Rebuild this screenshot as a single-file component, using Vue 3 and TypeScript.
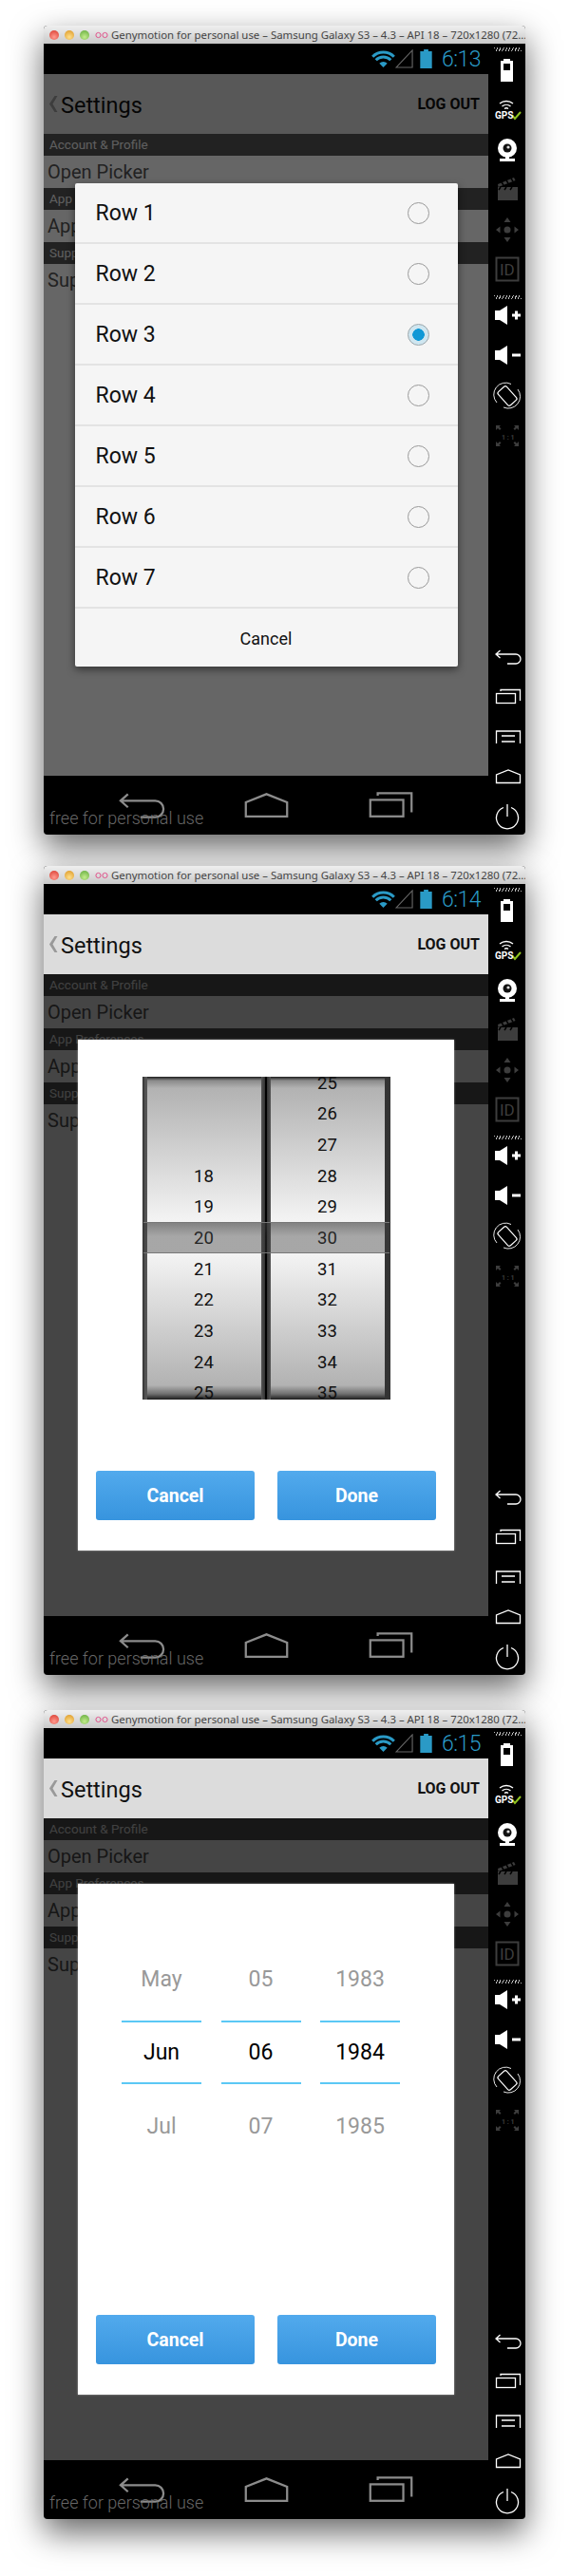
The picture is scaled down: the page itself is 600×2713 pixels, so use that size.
<script setup lang="ts">
type DialogKind = 'list' | 'wheel' | 'date';

interface Frame {
  time: string;
  dialog: DialogKind;
}

interface Tool {
  icon: string;
  label?: string;
  labelClass?: string;
  x?: number;
  y?: number;
}

const frames: Frame[] = [
  { time: '6:13', dialog: 'list' },
  { time: '6:14', dialog: 'wheel' },
  { time: '6:15', dialog: 'date' },
];

const sections = [
  { title: 'Account & Profile', row: 'Open Picker' },
  { title: 'App Preferences', row: 'App Settings' },
  { title: 'Support', row: 'Support Center' },
];

const listRows = ['Row 1', 'Row 2', 'Row 3', 'Row 4', 'Row 5', 'Row 6', 'Row 7'];

const leftWheel = ['', '', '', '18', '19', '20', '21', '22', '23', '24', '25'];
const rightWheel = ['25', '26', '27', '28', '29', '30', '31', '32', '33', '34', '35'];

const dateColumns = [
  ['May', 'Jun', 'Jul'],
  ['05', '06', '07'],
  ['1983', '1984', '1985'],
];

const topTools: Tool[] = [
  { icon: 'i-battery' },
  { icon: 'i-gps', label: 'GPS', labelClass: 'gps-text', x: 7, y: 31 },
  { icon: 'i-cam' },
  { icon: 'i-clapper' },
  { icon: 'i-dpad' },
  { icon: 'i-id', label: 'ID', labelClass: 'id-text', x: 12, y: 28 },
];
const midTools: Tool[] = [
  { icon: 'i-volup' },
  { icon: 'i-voldown' },
  { icon: 'i-rotate' },
  { icon: 'i-scale', label: '1 : 1', labelClass: 'scale-text', x: 14, y: 23 },
];
const bottomTools: Tool[] = [
  { icon: 'i-back' },
  { icon: 'i-recents' },
  { icon: 'i-menu' },
  { icon: 'i-home' },
  { icon: 'i-power' },
];
const navIcons = ['i-back', 'i-home', 'i-recents'];
</script>

<template>
  <svg class="sprites" aria-hidden="true">
    <symbol id="i-battery" viewBox="0 0 42 42">
      <path d="M16 10h7v2h3v22H13V12h3z" fill="#fff" />
      <rect x="16" y="15" width="7" height="7" fill="#000" />
    </symbol>
    <symbol id="i-gps" viewBox="0 0 42 42">
      <path d="M12 15a11 11 0 0 1 14 0M14.5 18a7 7 0 0 1 9 0M17 20.5a3.4 3.4 0 0 1 4 0" fill="none" stroke="#fff" stroke-width="1.4" />
      <path d="M25 27l3 4 6-7" fill="none" stroke="#8fc31f" stroke-width="2" />
    </symbol>
    <symbol id="i-cam" viewBox="0 0 42 42">
      <circle cx="20" cy="20" r="10" fill="#fff" />
      <circle cx="20" cy="20" r="4.5" fill="#111" />
      <circle cx="21" cy="19" r="1.6" fill="#ddd" />
      <rect x="18" y="29" width="4" height="3" fill="#fff" />
      <rect x="12" y="31" width="16" height="3" fill="#fff" />
    </symbol>
    <symbol id="i-clapper" viewBox="0 0 42 42">
      <rect x="10" y="19" width="21" height="14" fill="#3d3d3d" />
      <path d="M10 16l17-7 1.5 3-18 7z" fill="#3d3d3d" />
      <path d="M14 14l2 3M19 12l2 3M24 10l2 3M13 19l-2 3M19 19l-2 3M25 19l-2 3" stroke="#000" stroke-width="1.5" />
    </symbol>
    <symbol id="i-dpad" viewBox="0 0 42 42">
      <circle cx="20" cy="22" r="3.5" fill="#3d3d3d" />
      <path d="M20 9l3.5 5h-7zM20 35l3.5-5h-7zM8 22l4.5-3.5v7zM32 22l-4.5-3.5v7z" fill="#3d3d3d" />
    </symbol>
    <symbol id="i-id" viewBox="0 0 42 42">
      <rect x="8.5" y="9.5" width="23" height="24" fill="none" stroke="#3d3d3d" stroke-width="2" />
    </symbol>
    <symbol id="i-volup" viewBox="0 0 42 42">
      <path d="M7 13h5l8-5v20l-8-5H7z" fill="#fff" />
      <path d="M25 18h9M29.5 13.5v9" stroke="#fff" stroke-width="3" fill="none" />
    </symbol>
    <symbol id="i-voldown" viewBox="0 0 42 42">
      <path d="M7 13h5l8-5v20l-8-5H7z" fill="#fff" />
      <path d="M25 18h9" stroke="#fff" stroke-width="3" fill="none" />
    </symbol>
    <symbol id="i-rotate" viewBox="0 0 42 42">
      <path d="M9 26A12.5 12.5 0 0 1 24 6.5M31 12A12.5 12.5 0 0 1 16 31" fill="none" stroke="#fff" stroke-width="0.9" />
      <rect x="14" y="9.5" width="12" height="19" rx="2" transform="rotate(-42 20 19)" fill="none" stroke="#fff" stroke-width="1.2" />
    </symbol>
    <symbol id="i-scale" viewBox="0 0 42 42">
      <path d="M8 8h5l-1.500 1.500 2 2-1.500 1.500-2-2L8 13zM32 8h-5l1.500 1.500-2 2 1.500 1.500 2-2L32 13zM8 30h5l-1.500-1.500 2-2-1.500-1.500-2 2L8 25zM32 30h-5l1.500-1.500-2-2 1.500-1.500 2 2L32 25z" fill="#3d3d3d" />
    </symbol>
    <symbol id="i-back" viewBox="0 0 42 42">
      <path d="M12.500 14L8 18l4.500 4M8 18h21a5 5 0 0 1 0 10H20" fill="none" stroke="currentColor" stroke-width="1.300" />
    </symbol>
    <symbol id="i-recents" viewBox="0 0 42 42">
      <rect x="8.500" y="17.500" width="20" height="10" fill="none" stroke="currentColor" stroke-width="1.300" />
      <path d="M13 15v-1.500h20.500V25" fill="none" stroke="currentColor" stroke-width="1.300" />
    </symbol>
    <symbol id="i-menu" viewBox="0 0 42 42">
      <path d="M8.500 28V15h25v13M14 20h14M14 26h14" fill="none" stroke="currentColor" stroke-width="1.300" />
    </symbol>
    <symbol id="i-home" viewBox="0 0 42 42">
      <path d="M8.500 27.500V19L21 14l12.500 5v8.500z" fill="none" stroke="currentColor" stroke-width="1.300" />
    </symbol>
    <symbol id="i-power" viewBox="0 0 42 42">
      <path d="M16 11.500a11.500 11.500 0 1 0 8 0M20 8v13" fill="none" stroke="currentColor" stroke-width="1.300" />
    </symbol>
  </svg>

  <div class="page">
    <div v-for="frame in frames" :key="frame.time" class="window" :class="`window--${frame.dialog}`">
      <div class="titlebar">
        <span class="light light--red"></span>
        <span class="light light--yellow"></span>
        <span class="light light--green"></span>
        <svg class="geny" viewBox="0 0 14 8">
          <circle cx="3.5" cy="4" r="2.6" />
          <circle cx="10.5" cy="4" r="2.6" />
        </svg>
        <span class="title">Genymotion for personal use – Samsung Galaxy S3 – 4.3 – API 18 – 720x1280 (72...</span>
      </div>

      <div class="device">
        <div class="phone">
          <div class="statusbar">
            <svg class="status-wifi" viewBox="0 0 25 19">
              <path d="M1.2 6.700a16 16 0 0 1 22.600 0M4.700 10.200a11 11 0 0 1 15.600 0" fill="none" stroke="#2a9ac6" stroke-width="3" />
              <path d="M12.500 18l-4.200-4.200a6 6 0 0 1 8.400 0z" fill="#2a9ac6" />
            </svg>
            <svg class="status-signal" viewBox="0 0 20 21">
              <path d="M1 20L19 1v19z" fill="none" stroke="#666" stroke-width="1.2" />
            </svg>
            <svg class="status-battery" viewBox="0 0 13 21">
              <path d="M4 0h5v2h4v19H0V2h4z" fill="#2a9ac6" />
            </svg>
            <span class="clock">{{ frame.time }}</span>
          </div>

          <div class="screen">
            <div class="actionbar">
              <svg class="chevron" viewBox="0 0 9 17">
                <path d="M8.500 0L3.500 8.500l5 8.500H5.500L0 8.500 5.500 0z" fill="#999" />
              </svg>
              <span class="actionbar__title">Settings</span>
              <span class="actionbar__action">LOG OUT</span>
            </div>

            <div class="list">
              <template v-for="section in sections" :key="section.title">
                <div class="section">{{ section.title }}</div>
                <div class="row">{{ section.row }}</div>
              </template>

              <div class="overlay">
                <div v-if="frame.dialog === 'list'" class="sheet">
                  <div v-for="(row, i) in listRows" :key="row" class="sheet__row">
                    <span>{{ row }}</span>
                    <span class="radio" :class="{ 'radio--on': i === 2 }"></span>
                  </div>
                  <div class="sheet__cancel">Cancel</div>
                </div>

                <div v-else class="dialog">
                  <div v-if="frame.dialog === 'wheel'" class="wheel">
                    <div class="wheel__col">
                      <div class="wheel__list">
                        <span v-for="(n, i) in leftWheel" :key="i" class="wheel__item">{{ n }}</span>
                      </div>
                    </div>
                    <div class="wheel__divider"></div>
                    <div class="wheel__col">
                      <div class="wheel__list">
                        <span v-for="n in rightWheel" :key="n" class="wheel__item">{{ n }}</span>
                      </div>
                    </div>
                    <div class="wheel__band"></div>
                  </div>

                  <div v-else class="date">
                    <div v-for="col in dateColumns" :key="col[0]" class="date__col">
                      <span class="date__item">{{ col[0] }}</span>
                      <span class="date__item date__item--on">{{ col[1] }}</span>
                      <span class="date__item">{{ col[2] }}</span>
                    </div>
                  </div>

                  <div class="dialog__buttons">
                    <button class="btn">Cancel</button>
                    <button class="btn">Done</button>
                  </div>
                </div>
              </div>
            </div>
          </div>

          <div class="navbar">
            <svg v-for="icon in navIcons" :key="icon" class="navbar__icon">
              <use :href="`#${icon}`" />
            </svg>
            <span class="watermark">free for personal use</span>
          </div>
        </div>

        <div class="tools">
          <div class="tools__dots"></div>
          <svg v-for="tool in topTools" :key="tool.icon" class="tool" viewBox="0 0 42 42">
            <use :href="`#${tool.icon}`" />
            <text v-if="tool.label" :x="tool.x" :y="tool.y" :class="tool.labelClass">{{ tool.label }}</text>
          </svg>
          <div class="tools__dots tools__dots--mid"></div>
          <svg v-for="tool in midTools" :key="tool.icon" class="tool" viewBox="0 0 42 42">
            <use :href="`#${tool.icon}`" />
            <text v-if="tool.label" :x="tool.x" :y="tool.y" :class="tool.labelClass">{{ tool.label }}</text>
          </svg>
          <div class="tools__bottom">
            <svg v-for="tool in bottomTools" :key="tool.icon" class="tool" viewBox="0 0 42 42">
              <use :href="`#${tool.icon}`" />
            </svg>
          </div>
        </div>
      </div>
    </div>
  </div>
</template>

<style>
html,
body {
  margin: 0;
  background: #fff;
}
</style>

<style scoped>
.sprites {
  position: absolute;
  width: 0;
  height: 0;
}

.gps-text {
  font: 700 10px Roboto, sans-serif;
  fill: #fff;
}

.id-text {
  font: 400 17px Roboto, sans-serif;
  fill: #3d3d3d;
}

.scale-text {
  font: 700 7px Roboto, sans-serif;
  fill: #3d3d3d;
}

.page {
  box-sizing: border-box;
  width: 600px;
  height: 2713px;
  padding-top: 27px;
  overflow: hidden;
  font-family: Roboto, sans-serif;
}

.window {
  display: flex;
  flex-direction: column;
  width: 507px;
  height: 852px;
  margin-left: 46px;
  border-radius: 4px;
  background: #000;
  box-shadow: 0 14px 34px rgba(0, 0, 0, 0.6);
}

.window + .window {
  margin-top: 33px;
}

.window:last-child {
  margin-top: 37px;
}

/* mac title bar */
.titlebar {
  display: flex;
  align-items: center;
  flex: none;
  height: 19px;
  padding-left: 6px;
  border-radius: 4px 4px 0 0;
  background: linear-gradient(#efefef, #c9c9c9);
  overflow: hidden;
}

.light {
  flex: none;
  width: 10px;
  height: 10px;
  margin-right: 6px;
  border-radius: 50%;
}

.light--red {
  background: radial-gradient(circle at 50% 70%, #ff9a8f, #d8382c);
}

.light--yellow {
  background: radial-gradient(circle at 50% 70%, #ffdf8a, #da9420);
}

.light--green {
  background: radial-gradient(circle at 50% 70%, #c3ec8c, #5fa83a);
}

.geny {
  flex: none;
  width: 14px;
  height: 8px;
  margin-right: 3px;
  fill: none;
  stroke: #e0548c;
  stroke-width: 1;
}

.title {
  color: #444;
  font: 11.4px "Noto Sans", sans-serif;
  white-space: nowrap;
}

.device {
  display: grid;
  flex: 1;
  grid-template-columns: 468px 39px;
  min-height: 0;
}

.phone {
  display: flex;
  flex-direction: column;
  min-height: 0;
}

.statusbar {
  display: flex;
  align-items: center;
  justify-content: flex-end;
  flex: none;
  height: 32px;
  padding-right: 8px;
}

.status-wifi {
  width: 25px;
  height: 19px;
}

.status-signal {
  width: 19px;
  height: 20px;
}

.status-battery {
  width: 13px;
  height: 20px;
  margin-left: 7px;
}

.clock {
  margin-left: 10px;
  color: #2a9ac6;
  font-size: 23px;
  font-weight: 300;
  letter-spacing: -0.5px;
}

.screen {
  position: relative;
  display: flex;
  flex: 1;
  flex-direction: column;
  min-height: 0;
}

.actionbar {
  position: relative;
  display: flex;
  align-items: center;
  flex: none;
  height: 63px;
  padding: 0 9px 0 6px;
  background: #dcdcdc;
}

.chevron {
  width: 9px;
  height: 17px;
}

.actionbar__title {
  margin-left: 3px;
  padding-top: 2px;
  color: #111;
  font-size: 23.5px;
}

.actionbar__action {
  margin-left: auto;
  color: #111;
  font-size: 16px;
  font-weight: 700;
}

.list {
  flex: 1;
  background: #fff;
  min-height: 0;
}

.window--wheel .list,
.window--date .list {
  position: relative;
}

.section {
  height: 22.5px;
  padding-left: 6px;
  background: #555;
  color: #eee;
  font-size: 13.5px;
  line-height: 23px;
}

.row {
  height: 34.5px;
  padding-left: 4px;
  color: #555;
  font-size: 20px;
  line-height: 34px;
}

/* scrim */
.overlay {
  position: absolute;
  inset: 0;
  display: flex;
  align-items: center;
  justify-content: center;
  background: rgba(0, 0, 0, 0.73);
}

.window--list .overlay {
  background: rgba(0, 0, 0, 0.6);
}

.sheet {
  width: 403px;
  border-radius: 2px;
  background: #f5f5f5;
  box-shadow: 0 3px 8px rgba(0, 0, 0, 0.5);
}

.sheet__row {
  display: flex;
  align-items: center;
  justify-content: space-between;
  box-sizing: border-box;
  height: 64px;
  padding: 0 30px 0 22px;
  border-bottom: 2px solid #e3e3e3;
  color: #111;
  font-size: 23px;
}

.sheet__cancel {
  height: 61px;
  color: #111;
  font-size: 18px;
  line-height: 64px;
  text-align: center;
}

.radio {
  box-sizing: border-box;
  width: 23px;
  height: 23px;
  border: 1.5px solid #999;
  border-radius: 50%;
}

.radio--on {
  border-color: #9aa5aa;
  background: radial-gradient(circle, #0f98d6 0 6px, #cfe6f0 6.5px);
}

.dialog {
  display: flex;
  flex-direction: column;
  box-sizing: border-box;
  width: 396px;
  height: 538px;
  padding-bottom: 32px;
  background: #fff;
  box-shadow: 0 0 2px rgba(255, 255, 255, 0.5);
}

.wheel {
  position: relative;
  display: grid;
  grid-template-columns: 120px 10px 120px;
  box-sizing: border-box;
  width: 261px;
  height: 340px;
  margin: 39px auto 0;
  padding: 0 6px 0 5px;
  background: linear-gradient(to right, #2e2e2e, #555 3px, #333);
}

.wheel__col {
  overflow: hidden;
  background: linear-gradient(
    #1c1c1c 0,
    #8a8a8a 4px,
    #b2b2b2 12px,
    #f4f4f4 153px,
    #f4f4f4 186px,
    #b2b2b2 325px,
    #707070 334px,
    #1c1c1c 340px
  );
}

.wheel__list {
  display: flex;
  flex-direction: column;
  margin-top: -9.5px;
}

.wheel__item {
  flex: none;
  height: 32.7px;
  color: #111;
  font-size: 18.5px;
  line-height: 32.7px;
  text-align: center;
}

.wheel__divider {
  background: linear-gradient(to right, #555, #333 40%, #000 45%, #000 55%, #333 60%, #555);
}

.wheel__band {
  position: absolute;
  top: 153px;
  left: 1px;
  right: 1px;
  height: 31px;
  border-top: 1px solid #777;
  border-bottom: 1px solid #777;
  background: linear-gradient(rgba(60, 60, 60, 0.62), rgba(60, 60, 60, 0.42) 45%);
}

.date {
  display: grid;
  grid-template-columns: repeat(3, 84px);
  gap: 20.5px;
  justify-content: center;
  padding: 56px 11px 0 0;
}

.date__col {
  display: grid;
  grid-template-rows: 88px 67px 88px;
}

.date__item {
  display: flex;
  align-items: center;
  justify-content: center;
  color: #999;
  font-size: 23px;
}

.date__item--on {
  border-top: 2px solid #5bc8f5;
  border-bottom: 2px solid #5bc8f5;
  color: #000;
}

.dialog__buttons {
  display: flex;
  justify-content: space-between;
  margin-top: auto;
  padding: 0 19px;
}

.btn {
  width: 167px;
  height: 52px;
  border: 0;
  border-radius: 3px;
  background: linear-gradient(#52aaed, #3794de);
  color: #fff;
  font: 700 19.5px Roboto, sans-serif;
}

.navbar {
  position: relative;
  display: grid;
  flex: none;
  grid-template-columns: repeat(3, 131px);
  grid-template-rows: 62px;
  align-items: center;
  justify-content: center;
  height: 62px;
  color: #8c8c8c;
}

.navbar__icon {
  justify-self: center;
  width: 73px;
  height: 73px;
  margin: -6px 0;
  overflow: visible;
}

.watermark {
  position: absolute;
  left: 6px;
  bottom: 7px;
  color: #7a7a7a;
  font-size: 18px;
  font-weight: 300;
  opacity: 0.85;
}

/* emulator toolbar */
.tools {
  display: flex;
  flex-direction: column;
  color: #fff;
  min-height: 0;
}

.tool {
  flex: none;
  width: 42px;
  height: 42px;
}

.tools__dots {
  flex: none;
  width: 29px;
  height: 4px;
  margin: 4px 0 -2px 6px;
  background: repeating-linear-gradient(115deg, #bbb 0 1px, #000 1px 3px);
}

.tools__dots--mid {
  margin: 7px 0 -1px 6px;
}

.tools__bottom {
  display: flex;
  flex-direction: column;
  margin-top: auto;
  margin-bottom: -2px;
}
</style>
